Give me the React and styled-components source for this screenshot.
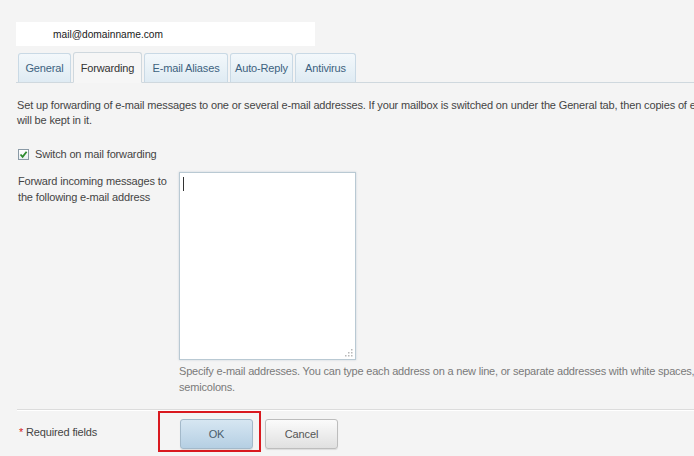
import React from "react";
import styled, { createGlobalStyle } from "styled-components";

const GlobalStyle = createGlobalStyle`
  html, body {
    margin: 0;
    padding: 0;
    background: #f4f4f4;
    overflow: hidden;
  }
  body {
    font-family: "Liberation Sans", Arial, sans-serif;
    font-size: 11px;
    letter-spacing: -0.15px;
  }
`;

const Page = styled.div`
  width: 840px;
  padding: 22px 0 0 16px;
  color: #444;
`;

const AccountBar = styled.div`
  width: 262px;
  height: 24px;
  padding-left: 37px;
  background: #fff;
  display: flex;
  align-items: center;
  letter-spacing: 0;
  font-size: 10.2px;
  color: #1a1a1a;
`;

const TabStrip = styled.div`
  display: flex;
  align-items: flex-end;
  gap: 2px;
  margin-top: 6px;
  padding-left: 2px;
  border-bottom: 1px solid #cfd8de;
  height: 30px;
`;

const Tab = styled.div`
  width: ${(p) => p.$w}px;
  height: ${(p) => (p.$active ? "31px" : "29px")};
  margin-bottom: ${(p) => (p.$active ? "-1px" : "0")};
  display: flex;
  align-items: center;
  justify-content: center;
  box-sizing: border-box;
  border: 1px solid ${(p) => (p.$active ? "#cfd8de" : "#c9d9e5")};
  border-bottom: ${(p) => (p.$active ? "1px solid #f6f6f6" : "none")};
  border-radius: 3px 3px 0 0;
  background: ${(p) =>
    p.$active
      ? "#f6f6f6"
      : "linear-gradient(#f3f8fb, #dfebf3)"};
  color: ${(p) => (p.$active ? "#333" : "#3d6280")};
`;

const Content = styled.div`
  padding-left: 1px;
`;

const Intro = styled.p`
  margin: 15px 0 0;
  width: 762px;
  line-height: 15px;
`;

const CheckRow = styled.label`
  display: flex;
  align-items: center;
  gap: 6px;
  margin-top: 20px;
  padding-left: 1px;
`;

const Box = styled.span`
  width: 11px;
  height: 11px;
  box-sizing: border-box;
  border: 1px solid #8a9aa6;
  background: linear-gradient(#fff, #e8eef2);
  display: flex;
  align-items: center;
  justify-content: center;
`;

const FieldRow = styled.div`
  display: grid;
  grid-template-columns: 162px 180px;
  margin-top: 12px;
`;

const FieldLabel = styled.div`
  padding-top: 1px;
  padding-left: 1px;
  line-height: 16px;
`;

const Area = styled.div`
  position: relative;
  width: 177px;
  height: 188px;
  box-sizing: border-box;
  background: #fff;
  border: 1px solid #b9c9d3;
  box-shadow: 0 0 2px rgba(120, 150, 170, 0.35);
`;

const Caret = styled.span`
  position: absolute;
  left: 3px;
  top: 4px;
  width: 1px;
  height: 14px;
  background: #333;
`;

const Grip = styled.svg`
  position: absolute;
  right: 2px;
  bottom: 2px;
`;

const Hint = styled.p`
  margin: 3px 0 0 162px;
  width: 600px;
  color: #7a7a7a;
  line-height: 16px;
  letter-spacing: -0.2px;
`;

const Footer = styled.div`
  margin-top: 14px;
  border-top: 1px solid #dcdcdc;
  box-shadow: inset 0 1px 0 #fff;
  display: flex;
  align-items: center;
  padding-top: 1px;
`;

const Required = styled.div`
  width: 139px;
  padding-left: 2px;
  span {
    color: #d42020;
  }
`;

const Highlight = styled.div`
  border: 2px solid #d9191f;
  padding: 6px 6px 1px 20px;
`;

const Button = styled.button`
  width: 73px;
  height: 30px;
  font-family: inherit;
  font-size: 11px;
  letter-spacing: -0.1px;
  border-radius: 3px;
  border: 1px solid ${(p) => (p.$primary ? "#a3b9ca" : "#bdbdbd")};
  background: ${(p) =>
    p.$primary
      ? "linear-gradient(#d6e6f2, #b5cfe3)"
      : "linear-gradient(#fbfbfb, #e0e0e0)"};
  color: ${(p) => (p.$primary ? "#4a5d6d" : "#555")};
  box-shadow: 0 1px 1px rgba(0, 0, 0, 0.1);
  padding: 0;
  margin-top: ${(p) => p.$offset || 0}px;
`;

const Buttons = styled.div`
  display: flex;
  align-items: flex-start;
  gap: 4px;
`;

const tabs = [
  ["General", 53],
  ["Forwarding", 69],
  ["E-mail Aliases", 84],
  ["Auto-Reply", 63],
  ["Antivirus", 61],
];

export default function App() {
  return (
    <Page>
      <GlobalStyle />
      <AccountBar>mail@domainname.com</AccountBar>
      <TabStrip>
        {tabs.map(([t, w]) => (
          <Tab key={t} $w={w} $active={t === "Forwarding"}>
            {t}
          </Tab>
        ))}
      </TabStrip>
      <Content>
        <Intro>
          Set up forwarding of e-mail messages to one or several e-mail addresses. If your mailbox is switched on under the General tab, then copies of e-mail messages will be kept in it.
        </Intro>
        <CheckRow>
          <Box>
            <svg width="9" height="9" viewBox="0 0 9 9">
              <path d="M1.5 4.5 L3.6 6.8 L7.6 1.8" fill="none" stroke="#2c8a2c" strokeWidth="1.8" />
            </svg>
          </Box>
          Switch on mail forwarding
        </CheckRow>
        <FieldRow>
          <FieldLabel>
            Forward incoming messages to
            <br />
            the following e-mail address
          </FieldLabel>
          <Area>
            <Caret />
            <Grip width="8" height="8" viewBox="0 0 8 8">
              <g fill="#b8b8b8">
                <rect x="6" y="0" width="1.5" height="1.5" />
                <rect x="3" y="3" width="1.5" height="1.5" />
                <rect x="6" y="3" width="1.5" height="1.5" />
                <rect x="0" y="6" width="1.5" height="1.5" />
                <rect x="3" y="6" width="1.5" height="1.5" />
                <rect x="6" y="6" width="1.5" height="1.5" />
              </g>
            </Grip>
          </Area>
        </FieldRow>
        <Hint>
          Specify e-mail addresses. You can type each address on a new line, or separate addresses with white spaces, commas, or
          semicolons.
        </Hint>
        <Footer>
          <Required>
            <span>*</span> Required fields
          </Required>
          <Buttons>
            <Highlight>
              <Button $primary>OK</Button>
            </Highlight>
            <Button $offset={8}>Cancel</Button>
          </Buttons>
        </Footer>
      </Content>
    </Page>
  );
}
